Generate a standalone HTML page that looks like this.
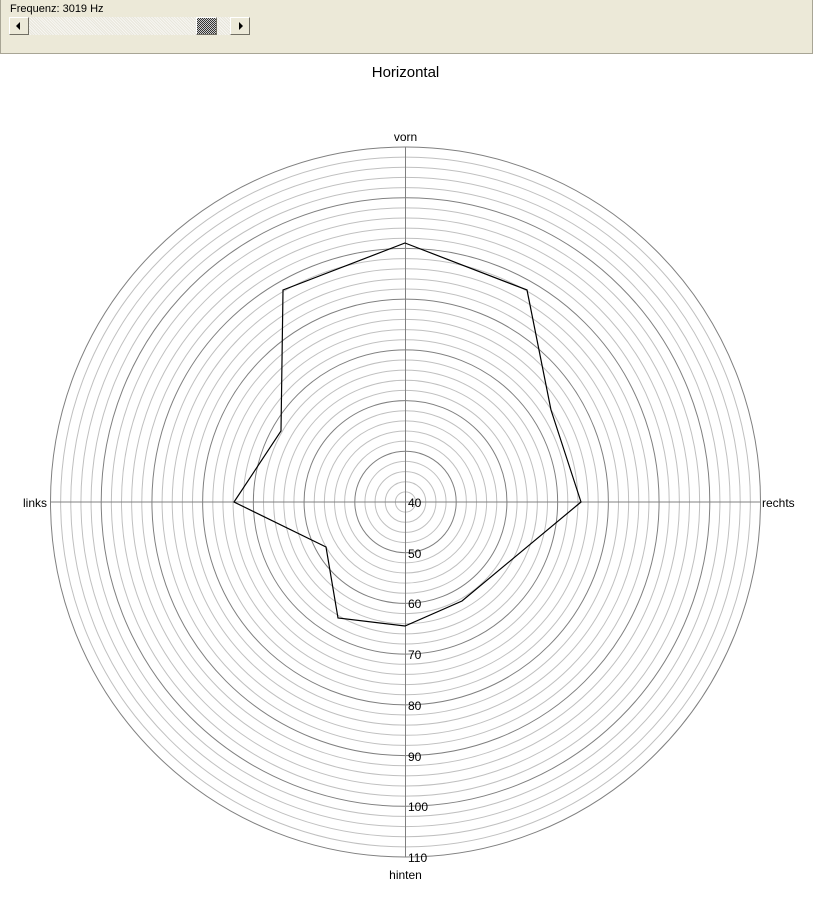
<!DOCTYPE html>
<html><head><style>
body{margin:0;width:813px;height:915px;background:#fff;overflow:hidden;font-family:"Liberation Sans",sans-serif;position:relative}
#top{position:absolute;left:0;top:0;width:811px;height:53px;background:#ece9d8;border:1px solid #a8a595;border-top:none}
#lbl{position:absolute;left:9px;top:3px;font-size:11px;color:#000}
#sb{position:absolute;left:8px;top:17px;width:241px;height:18px;background:#f4f3ee;background-image:repeating-linear-gradient(45deg,#e8e6dc 0 1px,#f7f6f1 1px 2px)}
.btn{position:absolute;top:0;width:18px;height:16px;background:#ece9d8;border:1px solid;border-color:#fff #716f64 #716f64 #fff}
#th{position:absolute;left:187px;top:0;width:19px;height:16px;border:1px solid;border-color:#fff #716f64 #716f64 #fff;background:repeating-conic-gradient(#333 0 25%,#ccc 0 50%) 0 0/2px 2px}
</style></head><body>
<div id="top"><div id="lbl">Frequenz: 3019 Hz</div>
<div id="sb"><div class="btn" style="left:0"><svg width="18" height="16"><polygon points="6,8 10,4 10,12" fill="#000"/></svg></div>
<div id="th"></div>
<div class="btn" style="left:221px"><svg width="18" height="16"><polygon points="12,8 8,4 8,12" fill="#000"/></svg></div></div></div>
<svg width="813" height="915" style="position:absolute;left:0;top:0" font-family="Liberation Sans, sans-serif" font-size="12">
<text x="405.5" y="77" font-size="15" text-anchor="middle">Horizontal</text>
<g fill="none" stroke="#c0c0c0">
<circle cx="405.5" cy="502" r="10.14"/><circle cx="405.5" cy="502" r="20.29"/><circle cx="405.5" cy="502" r="30.43"/><circle cx="405.5" cy="502" r="40.57"/>
<circle cx="405.5" cy="502" r="60.86"/><circle cx="405.5" cy="502" r="71"/><circle cx="405.5" cy="502" r="81.14"/><circle cx="405.5" cy="502" r="91.29"/>
<circle cx="405.5" cy="502" r="111.57"/><circle cx="405.5" cy="502" r="121.71"/><circle cx="405.5" cy="502" r="131.86"/><circle cx="405.5" cy="502" r="142"/>
<circle cx="405.5" cy="502" r="162.29"/><circle cx="405.5" cy="502" r="172.43"/><circle cx="405.5" cy="502" r="182.57"/><circle cx="405.5" cy="502" r="192.71"/>
<circle cx="405.5" cy="502" r="213"/><circle cx="405.5" cy="502" r="223.14"/><circle cx="405.5" cy="502" r="233.29"/><circle cx="405.5" cy="502" r="243.43"/>
<circle cx="405.5" cy="502" r="263.71"/><circle cx="405.5" cy="502" r="273.86"/><circle cx="405.5" cy="502" r="284"/><circle cx="405.5" cy="502" r="294.14"/>
<circle cx="405.5" cy="502" r="314.43"/><circle cx="405.5" cy="502" r="324.57"/><circle cx="405.5" cy="502" r="334.71"/><circle cx="405.5" cy="502" r="344.86"/>
</g>
<g fill="none" stroke="#808080">
<circle cx="405.5" cy="502" r="50.71"/><circle cx="405.5" cy="502" r="101.43"/><circle cx="405.5" cy="502" r="152.14"/><circle cx="405.5" cy="502" r="202.86"/>
<circle cx="405.5" cy="502" r="253.57"/><circle cx="405.5" cy="502" r="304.29"/><circle cx="405.5" cy="502" r="355"/>
</g>
<line x1="50" y1="502" x2="761" y2="502" stroke="#808080"/>
<line x1="405.5" y1="147" x2="405.5" y2="857" stroke="#808080"/>
<polygon fill="none" stroke="#000" stroke-width="1.2" points="405,243 527,290 551,410 581,502 462,601 405,626 338,618 326,547 234,502 281,431 283,290"/>
<text x="405.5" y="141" text-anchor="middle">vorn</text>
<text x="405.5" y="879" text-anchor="middle">hinten</text>
<text x="47" y="507" text-anchor="end">links</text>
<text x="762" y="507">rechts</text>
<g fill="#000"><text x="408" y="507">40</text><text x="408" y="558">50</text><text x="408" y="608">60</text><text x="408" y="659">70</text><text x="408" y="710">80</text><text x="408" y="761">90</text><text x="408" y="811">100</text><text x="408" y="862">110</text></g>
</svg>
</body></html>
